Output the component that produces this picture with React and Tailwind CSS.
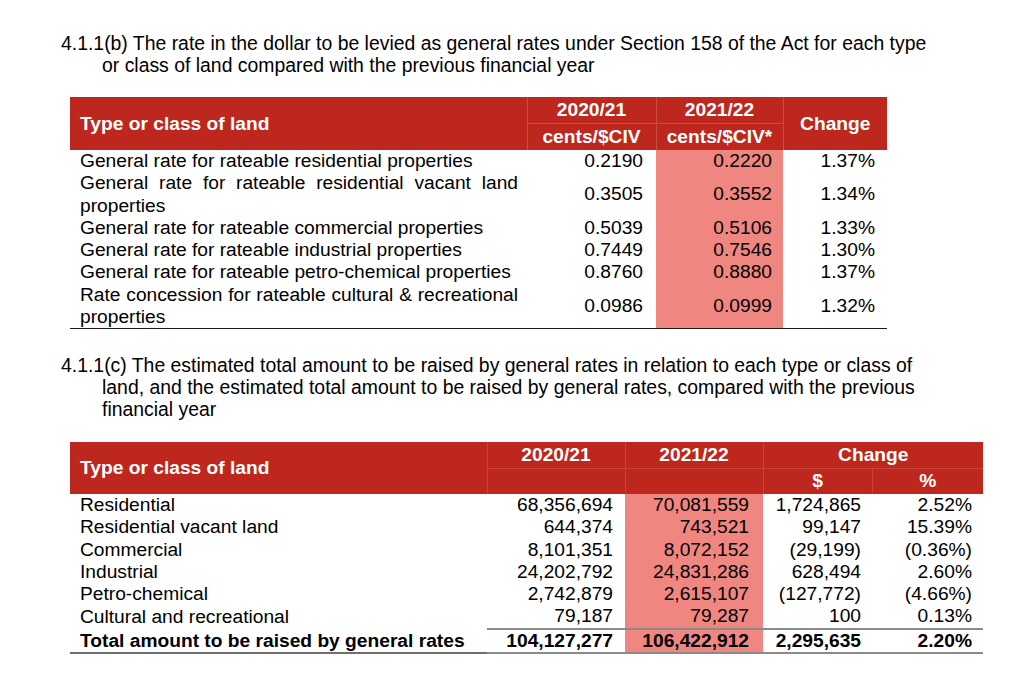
import React from "react";

// Two rate tables from a council budget page: rate in the dollar (b) and
// estimated amounts raised (c). Plain <table>s, red header, pink 2021/22 column.

const rates = [
  ["General rate for rateable residential properties", "0.2190", "0.2220", "1.37%"],
  ["General rate for rateable residential vacant land properties", "0.3505", "0.3552", "1.34%"],
  ["General rate for rateable commercial properties", "0.5039", "0.5106", "1.33%"],
  ["General rate for rateable industrial properties", "0.7449", "0.7546", "1.30%"],
  ["General rate for rateable petro-chemical properties", "0.8760", "0.8880", "1.37%"],
  ["Rate concession for rateable cultural & recreational properties", "0.0986", "0.0999", "1.32%"],
];

const amounts = [
  ["Residential", "68,356,694", "70,081,559", "1,724,865", "2.52%"],
  ["Residential vacant land", "644,374", "743,521", "99,147", "15.39%"],
  ["Commercial", "8,101,351", "8,072,152", "(29,199)", "(0.36%)"],
  ["Industrial", "24,202,792", "24,831,286", "628,494", "2.60%"],
  ["Petro-chemical", "2,742,879", "2,615,107", "(127,772)", "(4.66%)"],
  ["Cultural and recreational", "79,187", "79,287", "100", "0.13%"],
];

function RateTable() {
  return (
    <table className="w-[817px] table-fixed border-collapse text-[19.2px]">
      <colgroup>
        <col className="w-[457px]" />
        <col className="w-[129px]" />
        <col className="w-[127px]" />
        <col className="w-[104px]" />
      </colgroup>
      <thead className="bg-[#be271d] text-white">
        <tr className="h-[26px]">
          <th rowSpan={2} className="p-0 pl-[10px] text-left font-bold leading-[22px]">
            Type or class of land
          </th>
          <th className="border-l border-[#cc4c43] p-0 text-center font-bold leading-[22px]">2020/21</th>
          <th className="border-l border-[#cc4c43] p-0 text-center font-bold leading-[22px]">2021/22</th>
          <th rowSpan={2} className="border-l border-[#cc4c43] p-0 text-center font-bold leading-[22px]">
            Change
          </th>
        </tr>
        <tr className="h-[27px]">
          <th className="border-l border-t border-[#cc4c43] p-0 text-center font-bold leading-[22px]">cents/$CIV</th>
          <th className="border-l border-t border-[#cc4c43] p-0 text-center font-bold leading-[22px]">cents/$CIV*</th>
        </tr>
      </thead>
      <tbody>
        {rates.map(([label, prev, curr, change], i) => {
          const last = i === rates.length - 1;
          const edge = last ? "border-b-[1.5px] border-[#1a1a1a]" : "";
          return (
            <tr key={label}>
              <td className={`p-0 pl-[10px] pr-[9px] text-justify leading-[22.25px] ${edge}`}>{label}</td>
              <td className={`p-0 pr-[13px] text-right align-middle leading-[22.25px] ${edge}`}>{prev}</td>
              <td className={`bg-[#f08680] p-0 pr-[11px] text-right align-middle leading-[22.25px] ${edge}`}>{curr}</td>
              <td className={`p-0 pr-[12px] text-right align-middle leading-[22.25px] ${edge}`}>{change}</td>
            </tr>
          );
        })}
      </tbody>
    </table>
  );
}

function AmountTable() {
  const cell = "p-0 text-right leading-[22.3px]";
  return (
    <table className="w-[913px] table-fixed border-collapse text-[19.2px]">
      <colgroup>
        <col className="w-[417px]" />
        <col className="w-[138px]" />
        <col className="w-[138px]" />
        <col className="w-[109px]" />
        <col className="w-[111px]" />
      </colgroup>
      <thead className="bg-[#be271d] text-white">
        <tr className="h-[26px]">
          <th rowSpan={2} className="p-0 pl-[10px] text-left font-bold leading-[22px]">
            Type or class of land
          </th>
          <th className="border-l border-[#c7443b] p-0 text-center font-bold leading-[22px]">2020/21</th>
          <th className="border-l border-[#c7443b] p-0 text-center font-bold leading-[22px]">2021/22</th>
          <th colSpan={2} className="border-l border-[#c7443b] p-0 text-center font-bold leading-[22px]">
            Change
          </th>
        </tr>
        <tr className="h-[26px]">
          <th className="border-l border-t border-[#c7443b] p-0"></th>
          <th className="border-l border-t border-[#c7443b] p-0"></th>
          <th className="border-l border-t border-[#c7443b] p-0 text-center font-bold leading-[22px]">$</th>
          <th className="border-l border-t border-[#c7443b] p-0 text-center font-bold leading-[22px]">%</th>
        </tr>
      </thead>
      <tbody>
        {amounts.map(([label, prev, curr, dollars, pct]) => (
          <tr key={label}>
            <td className="p-0 pl-[10px] text-left leading-[22.3px]">{label}</td>
            <td className={`${cell} pr-[12px]`}>{prev}</td>
            <td className={`${cell} bg-[#f08680] pr-[14px]`}>{curr}</td>
            <td className={`${cell} pr-[11px]`}>{dollars}</td>
            <td className={`${cell} pr-[11px]`}>{pct}</td>
          </tr>
        ))}
        <tr className="font-bold">
          <td className="border-b-2 border-[#6e6e6e] p-0 pl-[10px] text-left leading-[21px]">
            Total amount to be raised by general rates
          </td>
          <td className={`${cell} border-t-2 border-b-2 border-[#8a8a8a] pr-[12px] leading-[21px]`}>104,127,277</td>
          <td className={`${cell} border-t-2 border-b-2 border-[#8a8a8a] bg-[#f08680] pr-[14px] leading-[21px]`}>106,422,912</td>
          <td className={`${cell} border-t-2 border-b-2 border-[#8a8a8a] pr-[11px] leading-[21px]`}>2,295,635</td>
          <td className={`${cell} border-t-2 border-b-2 border-[#8a8a8a] pr-[11px] leading-[21px]`}>2.20%</td>
        </tr>
      </tbody>
    </table>
  );
}

export default function App() {
  return (
    <div className="min-h-[675px] w-[1024px] bg-white font-['Liberation_Sans',Arial,sans-serif] text-black">
      <p className="pl-[102px] pt-[32px] -indent-[41px] text-[19.4px] leading-[22px]">
        4.1.1(b) The rate in the dollar to be levied as general rates under Section 158 of the Act for each type
        <br />
        or class of land compared with the previous financial year
      </p>
      <div className="ml-[70px] mt-[21px]">
        <RateTable />
      </div>
      <p className="mt-[25px] pl-[102px] -indent-[41px] text-[19.4px] leading-[22px]">
        4.1.1(c) The estimated total amount to be raised by general rates in relation to each type or class of
        <br />
        land, and the estimated total amount to be raised by general rates, compared with the previous
        <br />
        financial year
      </p>
      <div className="ml-[70px] mt-[22px]">
        <AmountTable />
      </div>
    </div>
  );
}
